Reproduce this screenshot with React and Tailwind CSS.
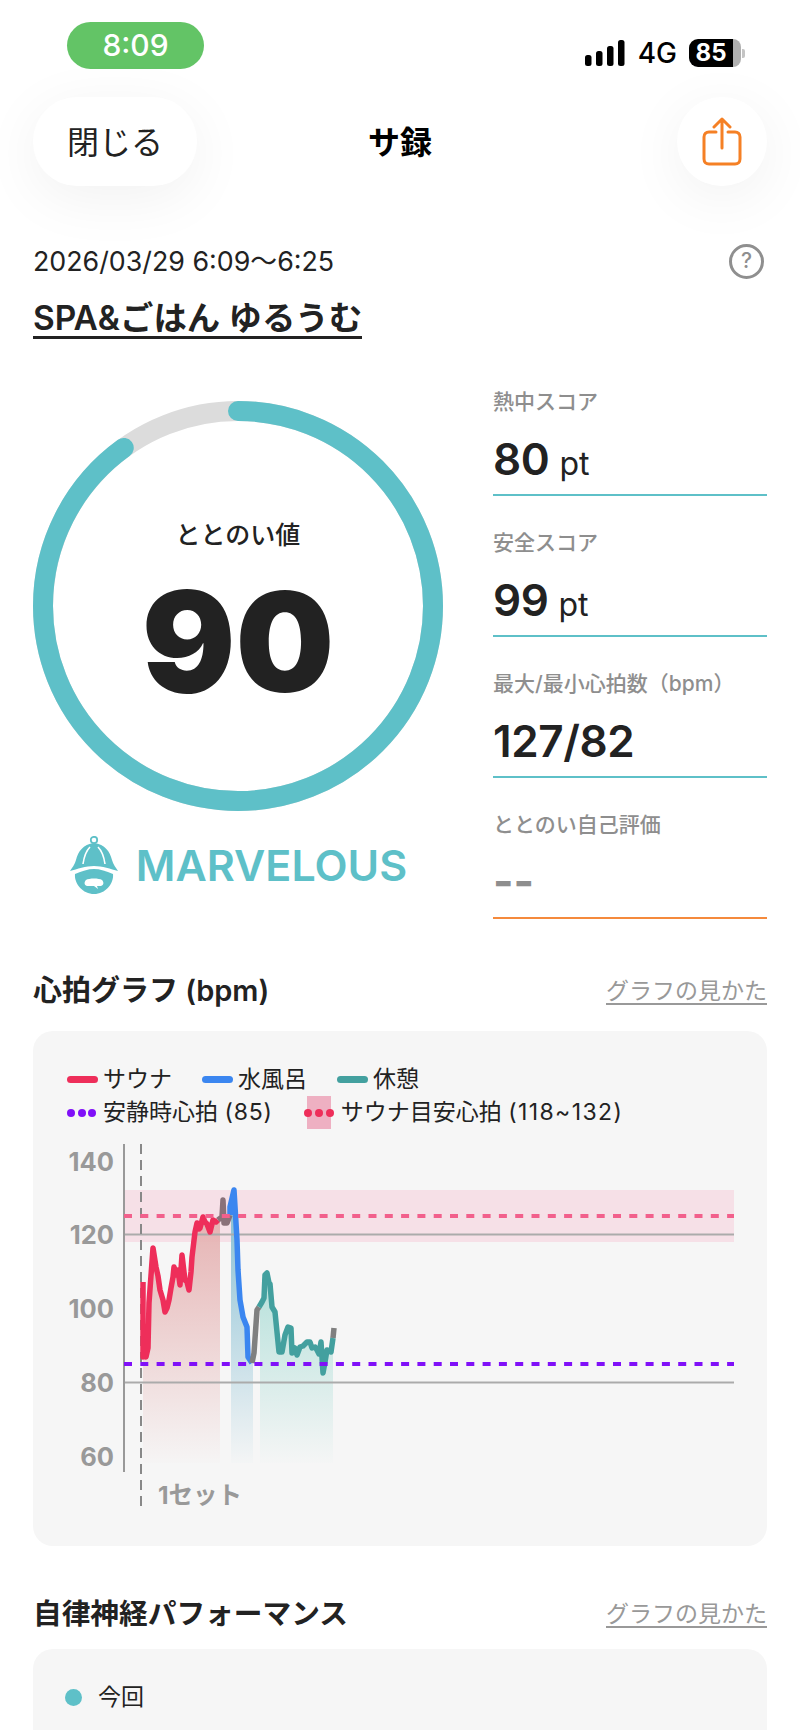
import React from 'react';

const TEAL = '#5ec0c8';

const saunaLine = [[143,1282],[143,1357],[146,1338],[146,1357],[148,1348],[149,1303],[153,1248],[156,1267],[158,1276],[160,1290],[163,1300],[165,1312],[167,1308],[169,1300],[171,1288],[173,1277],[174,1267],[176,1275],[178,1270],[180,1285],[182,1255],[184,1272],[185,1280],[187,1282],[189,1290],[191,1272],[192,1257],[195,1232],[197,1223],[199,1229],[200,1228],[203,1217],[205,1222],[207,1224],[210,1232],[213,1220],[216,1222],[218,1220]];
const greyLine1 = [[218,1220],[222,1217],[223,1200],[224,1223],[227,1223],[230,1215]];
const waterLine = [[230,1215],[230,1207],[234,1190],[237,1240],[238,1270],[240,1300],[243,1317],[247,1327],[248,1357],[252,1363]];
const greyLine2 = [[252,1363],[254,1353],[257,1310],[259,1307]];
const restLine = [[259,1307],[262,1302],[264,1298],[265,1275],[267,1273],[269,1283],[270,1284],[272,1307],[275,1312],[277,1332],[279,1352],[282,1352],[285,1335],[288,1327],[291,1328],[292,1353],[295,1348],[297,1355],[300,1347],[303,1346],[307,1342],[310,1342],[312,1348],[315,1347],[317,1350],[319,1354],[321,1342],[323,1373],[325,1362],[327,1350],[331,1352],[333,1338]];
const greyLine3 = [[333,1338],[334,1328]];

const toPoints = (arr) => arr.map((p) => p.join(',')).join(' ');
const toArea = (arr, left, right) => {
  const bottom = 1463;
  const inside = arr.filter((p) => p[0] >= left && p[0] <= right);
  return toPoints([[left, bottom], [left, inside[0][1]], ...inside, [right, inside[inside.length - 1][1]], [right, bottom]]);
};

const yLabels = [
  { label: '140', y: 1171 },
  { label: '120', y: 1244 },
  { label: '100', y: 1318 },
  { label: '80', y: 1392 },
  { label: '60', y: 1466 },
];

const stats = [
  { label: '熱中スコア', value: '80', unit: 'pt' },
  { label: '安全スコア', value: '99', unit: 'pt' },
  { label: '最大/最小心拍数（bpm）', value: '127/82' },
];

const HeartChart = () => (
  <svg viewBox="33 1140 734 406" className="block w-[734px] h-[406px]">
    <defs>
      <linearGradient id="fillRed" gradientUnits="userSpaceOnUse" x1="0" y1="1220" x2="0" y2="1463">
        <stop offset="0" stopColor="#e6b4b4" />
        <stop offset="1" stopColor="#e6b4b4" stopOpacity="0.02" />
      </linearGradient>
      <linearGradient id="fillBlue" gradientUnits="userSpaceOnUse" x1="0" y1="1220" x2="0" y2="1463">
        <stop offset="0" stopColor="#8fc3d6" />
        <stop offset="1" stopColor="#8fc3d6" stopOpacity="0.02" />
      </linearGradient>
      <linearGradient id="fillGreen" gradientUnits="userSpaceOnUse" x1="0" y1="1270" x2="0" y2="1463">
        <stop offset="0" stopColor="#b4e0da" />
        <stop offset="1" stopColor="#b4e0da" stopOpacity="0.02" />
      </linearGradient>
    </defs>

    <rect x="124" y="1190" width="610" height="52" fill="#f6e0e7" />
    <polygon points={toArea(saunaLine, 143, 220)} fill="url(#fillRed)" />
    <polygon points={toArea(waterLine, 231, 253)} fill="url(#fillBlue)" />
    <polygon points={toArea(restLine, 260, 333)} fill="url(#fillGreen)" />

    <line x1="124" y1="1234.5" x2="734" y2="1234.5" stroke="#ababab" strokeWidth="2" />
    <line x1="124" y1="1382.5" x2="734" y2="1382.5" stroke="#ababab" strokeWidth="2" />
    <line x1="124" y1="1144" x2="124" y2="1472" stroke="#999999" strokeWidth="2" />
    <line x1="141" y1="1144" x2="141" y2="1512" stroke="#888888" strokeWidth="2" strokeDasharray="10 6" />

    <polyline points={toPoints(saunaLine)} fill="none" stroke="#ee2e5a" strokeWidth="5.5" strokeLinejoin="round" />
    <polyline points={toPoints(greyLine1)} fill="none" stroke="#8a7179" strokeWidth="5.5" strokeLinejoin="round" />
    <polyline points={toPoints(waterLine)} fill="none" stroke="#3b86f0" strokeWidth="5.5" strokeLinejoin="round" />
    <polyline points={toPoints(greyLine2)} fill="none" stroke="#808080" strokeWidth="5.5" strokeLinejoin="round" />
    <polyline points={toPoints(restLine)} fill="none" stroke="#43a09f" strokeWidth="5.5" strokeLinejoin="round" />
    <polyline points={toPoints(greyLine3)} fill="none" stroke="#808080" strokeWidth="5.5" />

    <line x1="124" y1="1216" x2="734" y2="1216" stroke="#f2608c" strokeWidth="4" strokeDasharray="8 8.3" />
    <line x1="124" y1="1364" x2="734" y2="1364" stroke="#8010f8" strokeWidth="4" strokeDasharray="8 8.3" />

    {yLabels.map((item) => (
      <text key={item.label} x="114" y={item.y} textAnchor="end" fontSize="25.5" fontWeight="700" fill="#999999">
        {item.label}
      </text>
    ))}
    <text x="158" y="1504" fontSize="24.5" fontWeight="700" fill="#999999">1セット</text>
  </svg>
);

const Mascot = () => (
  <svg viewBox="0 0 50 58" className="w-[50px] h-[58px] shrink-0">
    <circle cx="25" cy="4" r="3.2" fill="none" stroke={TEAL} strokeWidth="1.8" />
    <path d="M25 7C14 8 9 16 7 24C6 28 3 32 1 35C8 33 17 30 25 30C33 30 42 33 49 35C47 32 44 28 43 24C41 16 36 8 25 7Z" fill={TEAL} />
    <path d="M14 28C15 21 17 15 21 11M36 28C35 21 33 15 29 11" fill="none" stroke="#ffffff" strokeWidth="1.6" />
    <path d="M6 38C13 35 19 33 25 33C31 33 37 35 44 38C45 48 36 58 25 58C14 58 5 48 6 38Z" fill={TEAL} />
    <path d="M17 44C20 42 30 42 33 44C35 46 35 49 32 50L28 50L29 53L25 50L18 50C15 49 15 46 17 44Z" fill="#ffffff" />
  </svg>
);

const App = () => {
  return (
    <div className="relative w-[800px] h-[1730px] overflow-hidden bg-white px-[33px] text-[#222222] font-['Inter','Noto_Sans_CJK_JP',sans-serif]">
      {/* Status bar */}
      <div className="flex justify-between items-start pt-[22px]">
        <div className="ml-[34px] flex h-[47px] w-[137px] items-center justify-center rounded-[24px] bg-[#63c466] text-[30px] font-medium text-white">
          8:09
        </div>
        <div className="mt-[17px] mr-[22px] flex h-[28px] items-center text-black">
          <svg viewBox="0 0 40 26" className="w-[40px] h-[26px]">
            <rect x="0" y="15" width="6.5" height="11" rx="2.5" fill="#000" />
            <rect x="11" y="11" width="6.5" height="15" rx="2.5" fill="#000" />
            <rect x="22" y="6" width="6.5" height="20" rx="2.5" fill="#000" />
            <rect x="33" y="0" width="6.5" height="26" rx="2.5" fill="#000" />
          </svg>
          <span className="ml-[13px] text-[28px] font-medium leading-none">4G</span>
          <div className="ml-[12px] flex h-[28px] items-center">
            <div className="flex h-[28px] w-[44px] items-center justify-center rounded-l-[9px] bg-black text-[24px] font-bold text-white">
              85
            </div>
            <div className="h-[28px] w-[8px] rounded-r-[8px] bg-[#b0b0b0]" />
            <div className="ml-[1px] h-[9px] w-[3px] rounded-r-[2px] bg-[#c4c4c4]" />
          </div>
        </div>
      </div>

      {/* Nav */}
      <div className="mt-[28px] grid grid-cols-3 items-center">
        <button className="flex h-[89px] w-[164px] items-center justify-center rounded-[44px] bg-white pt-[3px] text-[32px] shadow-[0_12px_60px_rgba(0,0,0,0.06)]">
          閉じる
        </button>
        <div className="pt-[3px] text-center text-[32px] font-bold text-black">サ録</div>
        <button className="flex h-[89px] w-[90px] items-center justify-center justify-self-end rounded-full bg-white shadow-[0_12px_60px_rgba(0,0,0,0.06)]">
          <svg viewBox="0 0 40 50" className="w-[40px] h-[50px]" fill="none" stroke="#f58025" strokeWidth="3" strokeLinecap="round" strokeLinejoin="round">
            <path d="M14 15H7C4 15 2 17 2 20V42C2 45 4 47 7 47H33C36 47 38 45 38 42V20C38 17 36 15 33 15H26" />
            <path d="M20 31V2M12 10L20 2L28 10" />
          </svg>
        </button>
      </div>

      {/* Date and venue */}
      <div className="mt-[58px] flex h-[34px] items-center justify-between">
        <span className="text-[26.8px]">2026/03/29 6:09～6:25</span>
        <span className="mr-[3px] flex h-[35px] w-[35px] items-center justify-center rounded-full border-[3px] border-[#8f8f8f] text-[21px] font-medium text-[#8f8f8f]">
          ?
        </span>
      </div>
      <div className="mt-[23px]">
        <span className="inline-block border-b-[3px] border-[#222222] text-[33.4px] font-semibold leading-[35px]">
          SPA&amp;ごはん ゆるうむ
        </span>
      </div>

      {/* Score */}
      <div className="mt-[46px] flex justify-between">
        <div className="w-[410px] pt-[16px]">
          <div className="relative h-[410px] w-[410px]">
            <svg viewBox="0 0 410 410" className="h-[410px] w-[410px]">
              <circle cx="205" cy="205" r="195" fill="none" stroke="#dcdcdc" strokeWidth="20" />
              <circle
                cx="205"
                cy="205"
                r="195"
                fill="none"
                stroke={TEAL}
                strokeWidth="20"
                strokeLinecap="round"
                strokeDasharray="1102.7 1225.2"
                transform="rotate(-90 205 205)"
              />
            </svg>
            <div className="absolute inset-0 flex flex-col items-center pt-[119px]">
              <div className="h-[30px] text-[25px] font-medium leading-[30px]">ととのい値</div>
              <div className="mt-[22px] h-[140px] text-[139px] font-black leading-[140px]">90</div>
            </div>
          </div>
          <div className="mt-[25px] flex items-center justify-center gap-[17px]">
            <Mascot />
            <span className="text-[43px] font-semibold leading-none text-[#5ec0c8]">MARVELOUS</span>
          </div>
        </div>

        <div className="flex w-[274px] flex-col gap-[30px]">
          {stats.map((item) => (
            <div key={item.label} className="h-[111px] border-b-2 border-[#5ec0c8]">
              <div className="h-[30px] pt-[2px] text-[21px] font-medium leading-[30px] text-[#8e8e8e]">{item.label}</div>
              <div className="mt-[19px] h-[49px] text-[44px] font-semibold leading-[50px] tracking-[-0.4px]">
                {item.value}
                {item.unit && <span className="ml-[10px] text-[32px] font-normal tracking-normal">{item.unit}</span>}
              </div>
            </div>
          ))}
          <div className="h-[111px] border-b-2 border-[#f58a3c]">
            <div className="h-[30px] pt-[2px] text-[21px] font-medium leading-[30px] text-[#8e8e8e]">ととのい自己評価</div>
            <div className="mt-[18px] h-[50px] text-[44px] font-bold leading-[50px] text-[#8e8e8e]">--</div>
          </div>
        </div>
      </div>

      {/* Heart rate graph */}
      <div className="mt-[52px] flex h-[40px] items-center justify-between">
        <h2 className="text-[29px] font-semibold">心拍グラフ (bpm)</h2>
        <a className="text-[23px] text-[#999999] underline underline-offset-4">グラフの見かた</a>
      </div>
      <div className="mt-[20px] h-[515px] rounded-[20px] bg-[#f6f6f6]">
        <div className="pl-[34px] pt-[33px] text-[23px]">
          <div className="flex h-[30px] items-center gap-[30px]">
            <div className="flex items-center gap-[5px]">
              <span className="h-[7px] w-[31px] rounded-full bg-[#ee2e5a]" />
              <span>サウナ</span>
            </div>
            <div className="flex items-center gap-[5px]">
              <span className="h-[7px] w-[31px] rounded-full bg-[#3b86f0]" />
              <span>水風呂</span>
            </div>
            <div className="flex items-center gap-[5px]">
              <span className="h-[7px] w-[31px] rounded-full bg-[#43a09f]" />
              <span>休憩</span>
            </div>
          </div>
          <div className="mt-[2px] flex h-[33px] items-center">
            <div className="flex w-[29px] justify-between">
              <span className="h-[8px] w-[8px] rounded-full bg-[#8010f8]" />
              <span className="h-[8px] w-[8px] rounded-full bg-[#8010f8]" />
              <span className="h-[8px] w-[8px] rounded-full bg-[#8010f8]" />
            </div>
            <span className="ml-[7px]">安静時心拍 <span className="tracking-[0.8px]">(85)</span></span>
            <div className="relative ml-[34px] h-[33px] w-[24px] bg-[#eeb0c2]">
              <div className="absolute left-[-3px] top-[13px] flex w-[30px] justify-between">
                <span className="h-[8px] w-[8px] rounded-full bg-[#ee2e5a]" />
                <span className="h-[8px] w-[8px] rounded-full bg-[#ee2e5a]" />
                <span className="h-[8px] w-[8px] rounded-full bg-[#ee2e5a]" />
              </div>
            </div>
            <span className="ml-[10px]">サウナ目安心拍 <span className="tracking-[1.4px]">(118~132)</span></span>
          </div>
        </div>
        <div className="mt-[11px]">
          <HeartChart />
        </div>
      </div>

      {/* Autonomic performance */}
      <div className="mt-[48px] flex h-[40px] items-center justify-between">
        <h2 className="text-[28.7px] font-semibold">自律神経パフォーマンス</h2>
        <a className="text-[23px] text-[#999999] underline underline-offset-4">グラフの見かた</a>
      </div>
      <div className="mt-[15px] h-[81px] rounded-t-[20px] bg-[#f6f6f6] pl-[32px] pt-[33px]">
        <div className="flex h-[30px] items-center gap-[16px]">
          <span className="h-[17px] w-[17px] rounded-full bg-[#5ec0c8]" />
          <span className="text-[23px]">今回</span>
        </div>
      </div>
    </div>
  );
};

export default App;
